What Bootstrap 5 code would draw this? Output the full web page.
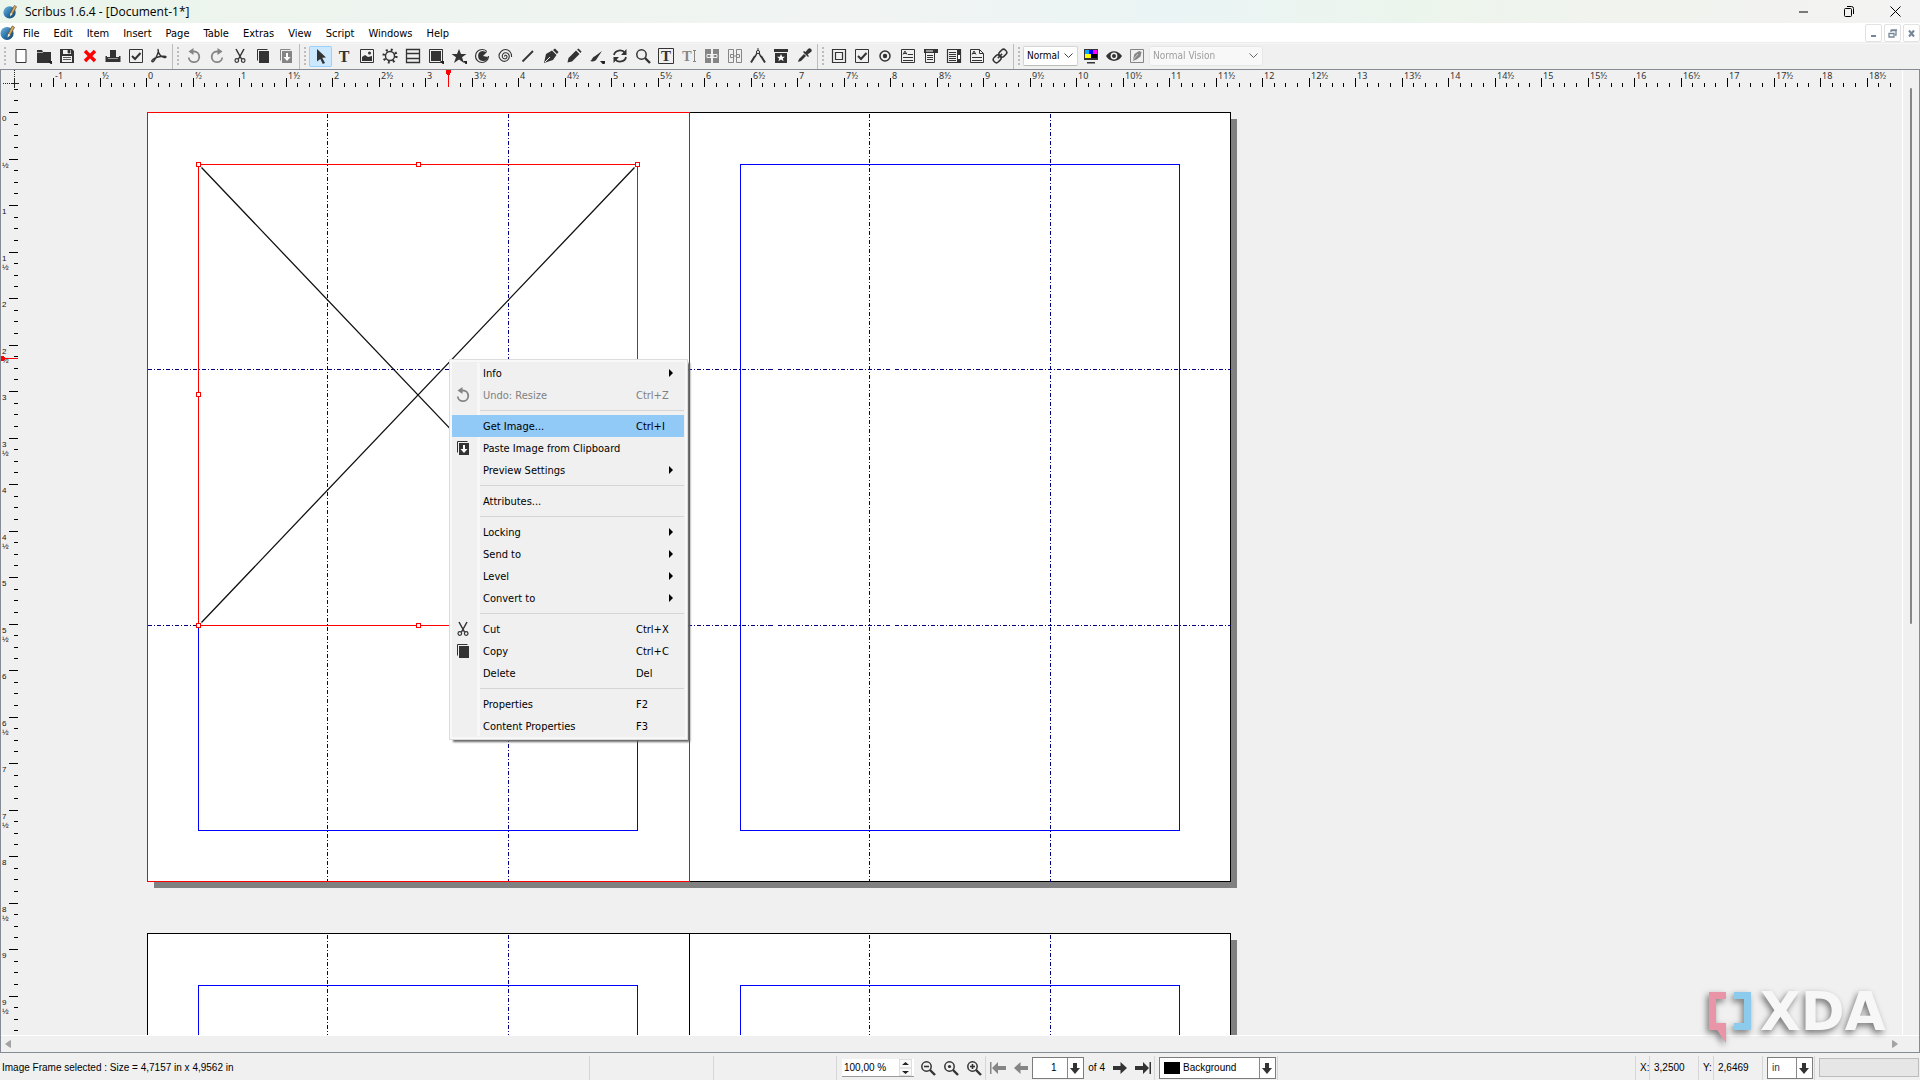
<!DOCTYPE html>
<html lang="en">
<head>
<meta charset="utf-8">
<meta name="viewport" content="width=device-width, initial-scale=1">
<title>Scribus 1.6.4 - [Document-1*]</title>
<link href="https://cdn.jsdelivr.net/npm/bootstrap@5.3.0/dist/css/bootstrap.min.css" rel="stylesheet">
<style>
  body { font: 11px/14px "DejaVu Sans Condensed", "DejaVu Sans", sans-serif; color: #000; background: #f0f0f0; }
  button, select, input { font: inherit; color: inherit; }
  button { border: 0; background: none; padding: 0; }
  svg { display: block; }
  .titlebar { height: 23px; padding: 0 2px 0 3px; font-family: "Open Sans", sans-serif; font-size: 12px; background: linear-gradient(90deg, #ebf5eb 0, #eef4f0 25%, #f1f4f3 45%, #eaf4f4 62%, #ecf5ec 74%, #f1f3ee 84%, #f3f3f3 100%); }
  .titlebar button { width: 46px; height: 21px; display: grid; place-items: center; }
  .menubar { height: 20px; padding-top: 1px; background: #fff; border-bottom: 1px solid #ececec; }
  .menubar a { color: #000; text-decoration: none; }
  .menus { gap: 14px; padding: 1px 0 0 8px; }
  .mdi { width: 17px; height: 18px; margin-left: 2px; border: 1px solid #e2e2e2; border-radius: 2px; background: #fff; color: #75869a; display: grid; place-items: center; }
  .toolbar { height: 26px; border-top: 1px solid #f7f7f7; font-size: 10px; }
  .tool-group { border-right: 1px solid #bdbdbd; padding: 0 2px 1px 0; height: 25px; }
  .tool-group:last-child { border: 0; }
  .grip { width: 2px; margin: 0 3px 0 4px; height: 19px; background: repeating-linear-gradient(#bcbcbc 0 2px, transparent 2px 4px); }
  .tool { width: 23px; height: 21px; display: grid; place-items: center; color: #333; border-radius: 2px; flex: none; }
  .tool svg { width: 16px; height: 16px; overflow: visible; }
  .tool:disabled { color: #858585; }
  .tool.pressed { background: #cce8ff; box-shadow: inset 0 0 0 1px #99d1ff; }
  .combo { appearance: none; height: 20px; border: 1px solid #d5d5d5; border-bottom-color: #bbb; border-radius: 2px; padding: 0 16px 0 3px; background: #fff url("data:image/svg+xml,%3Csvg xmlns='http://www.w3.org/2000/svg' width='9' height='6'%3E%3Cpath d='M.5.5l4 4 4-4' fill='none' stroke='%23444'/%3E%3C/svg%3E") no-repeat right 4px center; }
  .combo:disabled { color: #888; background-color: #fbfbfb; border-color: #e6e6e6; opacity: .8; }
  .combo-short { width: 55px; margin-right: 1px; } .combo-long { width: 114px; margin-left: 1px; }
  .workspace { position: relative; display: grid; grid-template: 18px minmax(0, 1fr) 17px / 18px minmax(0, 1fr) 17px; border: 1px solid #868a94; min-height: 0; }
  .ruler text { font: 9px "Noto Sans", sans-serif; fill: #333; }
  .ruler-side text { font: 8px "Liberation Sans", sans-serif; fill: #111; }
  .canvas-area, .ruler { overflow: hidden; }
  .fill { width: 100%; height: 100%; }
  .vscroll { grid-column: 3; grid-row: 1 / 3; border-left: 1px solid #fff; padding: 18px 0 0 7px; }
  .thumb { width: 2px; height: 56.6%; background: #868686; border-radius: 1px; }
  .hscroll { grid-column: 1 / 4; border-top: 1px solid #fff; padding: 0 21px 0 4px; color: #a3a3a3; }
  .context { position: absolute; left: 430px; top: 271px; width: 239px; background: #f0f0f0; border: 1px solid #dcdcdc; padding: 2px 3px 2px 2px; box-shadow: inset 0 0 0 2px #f8f8f8, 3px 3px 2px -1px #666; }
  .context::before { content: ""; position: absolute; left: 27px; top: 3px; bottom: 3px; width: 3px; background: #f7f7f7; }
  .context button { position: relative; display: grid; grid-template-columns: 31px 153px 1fr; align-items: center; width: 100%; height: 22px; padding-top: 2px; text-align: left; }
  .context button svg { width: 16px; height: 16px; margin: -2px 0 0 3px; color: #333; }
  .context button b { width: 0; height: 0; border: 4px solid transparent; border-left-color: #000; border-right: 0; margin: -2px 0 0 33px; }
  .context button:disabled { color: #808080; }
  .context button:disabled svg { color: #858585; }
  .context .current { background: #91c9f7; }
  .context hr { margin: 4px 0 4px 28px; height: 1px; border: 0; background: #d5d5d5; opacity: 1; }
  .watermark { position: absolute; right: 24px; bottom: 2px; width: 196px; height: 64px; overflow: visible; filter: drop-shadow(-2px 3px 3px #777); }
  .watermark text { font: bold 53px "DejaVu Sans", sans-serif; fill: #f7f7f7; }
  .statusbar { height: 27px; padding: 2px 1px 0 2px; font-family: "Liberation Sans", sans-serif; font-size: 10px; white-space: nowrap; }
  .cell { height: 24px; border-left: 1px solid #d6d6d6; display: flex; align-items: center; flex: none; }
  .statusbar .tool { height: 22px; }
  .spin { width: 73px; height: 18px; margin: 0 2px 0 1px; background: #fff; border-bottom: 1px solid #999; }
  .spin input { border: 0; width: 57px; padding: 2px 2px 0; background: none; }
  .spin div { width: 13px; border: 1px solid #ddd; background: #f8f8f8; }
  .boxed { appearance: none; height: 22px; border: 1px solid #7c7c7c; outline: 0; border-radius: 0; background: #fff url("data:image/svg+xml,%3Csvg xmlns='http://www.w3.org/2000/svg' width='16' height='20'%3E%3Cpath d='M.5 0v20' stroke='%23888'/%3E%3Cpath d='M6 5h4v5h3l-5 6-5-6h3z' fill='%23333'/%3E%3C/svg%3E") no-repeat right center; padding: 0 18px 0 4px; }
  .boxed-page { width: 59px; padding-left: 18px; } .boxed-layer { width: 117px; padding-left: 23px; } .boxed-unit { width: 46px; color: #1a3a5c; }
  .page-count { padding: 0 3px 0 4px; }
  .layer-pick { position: relative; margin-left: 4px; }
  .layer-pick i { position: absolute; left: 5px; top: 5px; width: 16px; height: 12px; background: #000; }
  .meter { width: 100px; height: 19px; border: 1px solid #bcbcbc; background: #e6e6e6; }
</style>
<script src="https://cdn.jsdelivr.net/npm/bootstrap@5.3.0/dist/js/bootstrap.bundle.min.js"></script>
</head>
<body class="vh-100 d-flex flex-column overflow-hidden">

<svg width="0" height="0" class="position-absolute" aria-hidden="true">
  <defs>
    <linearGradient id="ball" x1="0" y1="0" x2="1" y2="1"><stop offset="0" stop-color="#7db7dc"/><stop offset=".5" stop-color="#2b78ae"/><stop offset="1" stop-color="#0f3d66"/></linearGradient>
    <symbol id="i-app" viewBox="0 0 16 16"><circle cx="7.500" cy="8.500" r="7" fill="url(#ball)"/><path d="M8 13l.5-4L13 .5 15.500 2 11 10z" fill="#d8a860" stroke="#5b4326" stroke-width=".7"/><path d="M8 13l.5-4 2.500 1.200z" fill="#f3efe4"/></symbol>
    <symbol id="i-new" viewBox="0 0 16 16"><path d="M3 1.500h10v13H3z" fill="#fff" stroke="currentColor"/></symbol>
    <symbol id="i-open" viewBox="0 0 16 16"><path d="M1 2h5l1 2h8v11H1z" fill="currentColor"/><path d="M1 4.500h6" stroke="#aaa"/><path d="M12 13h7l-3.500 4z" fill="#222"/></symbol>
    <symbol id="i-save" viewBox="0 0 16 16"><path d="M1 1h12l2 2v12H1z" fill="currentColor"/><path d="M4 2h8v4H4zM3 8h10v6H3z" fill="#f0f0f0"/><path d="M9 2h2v3H9zM4 9.500h8M4 11.500h8" stroke="currentColor" fill="currentColor" stroke-width=".8"/></symbol>
    <symbol id="i-close" viewBox="0 0 16 16"><path d="M3 3l10 10M13 3L3 13" stroke="red" stroke-width="3.400"/></symbol>
    <symbol id="i-print" viewBox="0 0 16 16"><path d="M5 2h6v7h3v-1h1.500v6H.5V8H2v1h3z" fill="currentColor"/><path d="M3 10.500h10" stroke="#999"/></symbol>
    <symbol id="i-check" viewBox="0 0 16 16"><path d="M1.500 1.500h13v13h-13z" fill="none" stroke="currentColor"/><path d="M4 8l3 3 5.500-6" fill="none" stroke="currentColor" stroke-width="2"/></symbol>
    <symbol id="i-pdf" viewBox="0 0 16 16"><path d="M6.500 1.500c2 0 0 5-1.500 8s-3 5-4 4 2-3.500 6-4.500 8-1 8 0-4 .5-6-2S7 1.500 7 1.500" fill="none" stroke="currentColor" stroke-width="1.400"/></symbol>
    <symbol id="i-undo" viewBox="0 0 16 16"><path d="M6 3.500h2a5.300 5.300 0 1 1-5.300 6" fill="none" stroke="currentColor" stroke-width="1.800"/><path d="M7.500 0v7L2.500 3.500z" fill="currentColor"/></symbol>
    <symbol id="i-redo" viewBox="0 0 16 16"><path d="M10 3.500H8a5.300 5.300 0 1 0 5.300 6" fill="none" stroke="currentColor" stroke-width="1.800"/><path d="M8.500 0v7l5-3.500z" fill="currentColor"/></symbol>
    <symbol id="i-cut" viewBox="0 0 16 16"><path d="M4 1l5.500 10M12 1L6.500 11" stroke="currentColor" stroke-width="1.500"/><circle cx="4.800" cy="12.500" r="1.800" fill="none" stroke="currentColor" stroke-width="1.200"/><circle cx="11.200" cy="12.500" r="1.800" fill="none" stroke="currentColor" stroke-width="1.200"/></symbol>
    <symbol id="i-copy" viewBox="0 0 16 16"><path d="M2.500 12.500v-11h10" fill="none" stroke="currentColor"/><path d="M4 3h10v12H4z" fill="currentColor"/></symbol>
    <symbol id="i-paste" viewBox="0 0 16 16"><path d="M2.500 12.500v-11h10" fill="none" stroke="currentColor"/><path d="M4 3h10v12H4z" fill="currentColor"/><path d="M8 5h2v4h2.500L9 13 5.500 9H8z" fill="#fff"/></symbol>
    <symbol id="i-arrow" viewBox="0 0 16 16"><path d="M4 1l9 8.500-3.800.3L12 15l-2.200 1-2.500-5L4 13.500z" fill="currentColor"/></symbol>
    <symbol id="i-image" viewBox="0 0 16 16"><path d="M1.500 1.500h13v13h-13z" fill="none" stroke="currentColor"/><path d="M3 13V9l3-2 3 2 4-1v5z" fill="currentColor"/><circle cx="10.500" cy="5" r="1.500" fill="currentColor"/></symbol>
    <symbol id="i-gear" viewBox="0 0 16 16"><circle cx="8" cy="8" r="4.500" fill="none" stroke="currentColor" stroke-width="1.400"/><circle cx="8" cy="8" r="6.300" fill="none" stroke="currentColor" stroke-width="2.600" stroke-dasharray="1.900 3.048"/></symbol>
    <symbol id="i-table" viewBox="0 0 16 16"><path d="M1.500 1.500h13v13h-13zM2 5.500h12M2 10.500h12" fill="none" stroke="currentColor" stroke-width="1.300"/></symbol>
    <symbol id="i-shape" viewBox="0 0 16 16"><path d="M1.500 1.500h13v13h-13z" fill="none" stroke="currentColor"/><path d="M3 3h10v10H3z" fill="currentColor"/><path d="M12 13h7l-3.500 4z" fill="#222"/></symbol>
    <symbol id="i-star" viewBox="0 0 16 16"><path d="M8 1l2 5h5.500L11 9.200 13 15l-5-3.500L3 15l2-5.800L.5 6H6z" fill="currentColor"/><path d="M12 13h7l-3.500 4z" fill="#222"/></symbol>
    <symbol id="i-pie" viewBox="0 0 16 16"><path d="M8 1.500A6.500 6.500 0 1 0 14.500 8" fill="none" stroke="currentColor" stroke-width="1.200"/><path d="M8.500 3A5 5 0 1 0 14 9l-5-1 4-4z" fill="currentColor"/><path d="M8 1.500a6.500 6.500 0 0 1 5 2" fill="none" stroke="currentColor"/></symbol>
    <symbol id="i-spiral" viewBox="0 0 16 16"><path d="M8 8.500c-1-1 1-2 1.800-.5S9 11 7.300 10.800 4.500 8 6 6s5-1.500 6 1-1 6-4 6.300S2 11 2 8s3-6.500 6.500-6.500S15 5 14.500 9" fill="none" stroke="currentColor" stroke-width="1.100"/></symbol>
    <symbol id="i-line" viewBox="0 0 16 16"><path d="M2.500 13.500L13 3" stroke="currentColor" stroke-width="1.800"/></symbol>
    <symbol id="i-pen" viewBox="0 0 16 16"><path d="M1 15l2-9 6-3.500L13.500 7 10 12z" fill="currentColor"/><path d="M10 2l2-1.500L15.500 4 14 6z" fill="currentColor"/><path d="M2 14l5-5" stroke="#f0f0f0"/></symbol>
    <symbol id="i-pencil" viewBox="0 0 16 16"><path d="M1.500 14.500l1-4.500L10 2.500 13.500 6 6 13.500zM11 1.500l1.500-1 3 3-1 1.500z" fill="currentColor"/></symbol>
    <symbol id="i-brush" viewBox="0 0 16 16"><path d="M1 13c2 0 2-4 4.500-4.500L13 3l-5 7.500C7 13 4 14 1 13z" fill="currentColor"/><path d="M11 13h7l-3.500 4z" fill="#222"/></symbol>
    <symbol id="i-rotate" viewBox="0 0 16 16"><path d="M2 7a6 5.500 0 0 1 11-2M14 9a6 5.500 0 0 1-11 2" fill="none" stroke="currentColor" stroke-width="1.800"/><path d="M14.500 1v6H9zM1.500 15V9H7z" fill="currentColor"/></symbol>
    <symbol id="i-zoom" viewBox="0 0 16 16"><circle cx="6.500" cy="6.500" r="4.700" fill="none" stroke="currentColor" stroke-width="1.500"/><path d="M10 10l5 5" stroke="currentColor" stroke-width="2.400"/></symbol>
    <symbol id="i-zoomout" viewBox="0 0 16 16"><use href="#i-zoom"/><path d="M4 6.500h5" stroke="currentColor" stroke-width="1.600"/></symbol>
    <symbol id="i-zoomin" viewBox="0 0 16 16"><use href="#i-zoomout"/><path d="M6.500 4v5" stroke="currentColor" stroke-width="1.600"/></symbol>
    <symbol id="i-zoomone" viewBox="0 0 16 16"><use href="#i-zoom"/><circle cx="6.500" cy="6.500" r="1.600" fill="currentColor"/></symbol>
    <symbol id="i-link" viewBox="0 0 16 16"><path d="M1 1h6v14H1zM9 1h6v14H9z" fill="currentColor"/><path d="M3 6.500h4v3H3zM9 6.500h4v3H9zM6 8h4" fill="none" stroke="#f0f0f0"/></symbol>
    <symbol id="i-unlink" viewBox="0 0 16 16"><path d="M1.500 1.500h5v13h-5zM9.500 1.500h5v13h-5zM3.500 6.500h3v3h-3zM9.500 6.500h3v3h-3zM6 8h4" fill="none" stroke="currentColor"/></symbol>
    <symbol id="i-measure" viewBox="0 0 16 16"><path d="M7 5L5 9M9 5l2 4" stroke="currentColor" stroke-width="1.500"/><path d="M5 8l-4 6.500M11 8l4 6.500" stroke="currentColor" stroke-width="2"/><circle cx="8" cy="4" r="1.600" fill="none" stroke="currentColor"/><path d="M8 0v2" stroke="currentColor"/></symbol>
    <symbol id="i-props" viewBox="0 0 16 16"><path d="M1 1h14v3H1zM2 5h12v10H2z" fill="currentColor"/><path d="M8 6l1.200 2.700h2.800l-2.200 1.800.8 2.800L8 11.600l-2.600 1.700.8-2.800L4 8.700h2.800z" fill="#fff"/></symbol>
    <symbol id="i-drop" viewBox="0 0 16 16"><path d="M2 14l1-3 5-5 2 2-5 5zM7 4l5 5 1-1-1.500-1.500L15 4a2 2 0 0 0-3-3L9.500 4 8 3z" fill="currentColor"/></symbol>
    <symbol id="i-pushbtn" viewBox="0 0 16 16"><path d="M1.500 1.500h13v13h-13zM4.500 4.500h7v7h-7z" fill="none" stroke="currentColor" stroke-width="1.200"/></symbol>
    <symbol id="i-radio" viewBox="0 0 16 16"><circle cx="8" cy="8" r="5" fill="none" stroke="currentColor" stroke-width="1.500"/><circle cx="8" cy="8" r="2.200" fill="currentColor"/></symbol>
    <symbol id="i-field" viewBox="0 0 16 16"><path d="M1.500 1.500h13v13h-13zM3 6.500L5 3l2 3.500M3.500 5.500h3M8 6.500h5M3 9.500h10M3 12.500h10" fill="none" stroke="currentColor"/></symbol>
    <symbol id="i-combo" viewBox="0 0 16 16"><path d="M1 1h14v4H1z" fill="currentColor"/><path d="M2.500 5v9.500h9V5M4 7.500h6M4 9.500h6M4 11.500h6" fill="none" stroke="currentColor"/><path d="M3 3h7" stroke="#fff"/></symbol>
    <symbol id="i-list" viewBox="0 0 16 16"><path d="M1.500 1.500h13v13h-13zM3 4.500h7M3 6.500h7M3 8.500h7M3 10.500h7M3 12.500h7" fill="none" stroke="currentColor" stroke-width="1.200"/><path d="M11 1h4v14h-4z" fill="currentColor"/><path d="M12 7h2v4h-2z" fill="#fff"/></symbol>
    <symbol id="i-note" viewBox="0 0 16 16"><path d="M1.500 1.500h9l4 4v9h-13zM10.500 1.500v4h4M3 6.500L5 3l2 3.500M3.500 5.500h3M3 9.500h10M3 12.500h10" fill="none" stroke="currentColor"/></symbol>
    <symbol id="i-chain" viewBox="0 0 16 16"><g transform="rotate(-45 8 8)" fill="none" stroke="currentColor" stroke-width="1.500"><rect x="0" y="5" width="8" height="6" rx="2.500"/><rect x="8" y="5" width="8" height="6" rx="2.500"/><path d="M5 8h6"/></g></symbol>
    <symbol id="i-cmyk" viewBox="0 0 16 16"><path d="M1 1h14v11H1z" fill="currentColor"/><path d="M2 2h4v4H2z" fill="#0af"/><path d="M6 2h4v4H6z" fill="#00f"/><path d="M10 2h4v4h-4z" fill="#f0f"/><path d="M2 6h6v4H2z" fill="#ff0"/><path d="M8 6h6v4H8z"/><path d="M4 14h8v1.500H4z" fill="currentColor"/></symbol>
    <symbol id="i-eye" viewBox="0 0 16 16"><path d="M0 8c4-6.500 12-6.500 16 0-4 6.500-12 6.500-16 0z" fill="currentColor"/><circle cx="8" cy="8" r="3.400" fill="#f0f0f0"/><circle cx="8" cy="8" r="2" fill="currentColor"/></symbol>
    <symbol id="i-edit" viewBox="0 0 16 16"><path d="M1.500 1.500h13v13h-13z" fill="none" stroke="currentColor"/><path d="M3.500 13l2-7L10 3l2.500 1-1 4.500-4 3z" fill="currentColor"/><path d="M3 13l6-7" stroke="#f0f0f0" stroke-width=".7"/></symbol>
    <symbol id="i-prev" viewBox="0 0 16 16"><path d="M1 8l6.500-6v4H15v4H7.500v4z" fill="currentColor"/></symbol>
    <symbol id="i-next" viewBox="0 0 16 16"><path d="M15 8L8.500 2v4H1v4h7.500v4z" fill="currentColor"/></symbol>
    <symbol id="i-first" viewBox="0 0 16 16"><path d="M0 2h1.500v12H0zM2 8l6-6v4h8v4H8v4z" fill="currentColor"/></symbol>
    <symbol id="i-last" viewBox="0 0 16 16"><path d="M16 2h-1.500v12H16zM14 8L8 2v4H0v4h8v4z" fill="currentColor"/></symbol>
    <symbol id="i-text" viewBox="0 0 16 16"><text x="8" y="13.500" text-anchor="middle" font-family="Liberation Serif, serif" font-weight="700" font-size="16" fill="currentColor">T</text></symbol>
    <symbol id="i-textbox" viewBox="0 0 16 16"><path d="M.5.5h15v15H.5z" fill="none" stroke="currentColor"/><text x="8" y="13" text-anchor="middle" font-family="Liberation Serif, serif" font-weight="700" font-size="15" fill="currentColor">T</text></symbol>
    <symbol id="i-textcur" viewBox="0 0 16 16"><text x="6" y="13" text-anchor="middle" font-family="Liberation Serif, serif" font-weight="700" font-size="14" fill="currentColor">T</text><path d="M12 2.500h3M12 13.500h3M13.500 3v10" stroke="currentColor"/></symbol>
  </defs>
</svg>

<header class="titlebar d-flex align-items-center flex-shrink-0">
  <svg class="me-1" width="14" height="16"><use href="#i-app"/></svg>
  <span class="ps-1 me-auto">Scribus 1.6.4 - [Document-1*]</span>
  <button aria-label="Minimize"><svg width="11" height="11"><path d="M1 6h9" stroke="#000"/></svg></button>
  <button aria-label="Restore"><svg width="11" height="11"><rect x=".5" y="2.500" width="7" height="8" rx="1" fill="none" stroke="#000"/><path d="M3 .5h4.500a2 2 0 0 1 2 2V8" fill="none" stroke="#000"/></svg></button>
  <button aria-label="Close"><svg width="11" height="11"><path d="M.5.5l10 10M10.500.5l-10 10" stroke="#000"/></svg></button>
</header>

<nav class="menubar d-flex align-items-center flex-shrink-0" aria-label="Main menu">
  <svg width="15" height="16"><use href="#i-app"/></svg>
  <div class="menus d-flex">
    <a href="#">File</a><a href="#">Edit</a><a href="#">Item</a><a href="#">Insert</a><a href="#">Page</a><a href="#">Table</a><a href="#">Extras</a><a href="#">View</a><a href="#">Script</a><a href="#">Windows</a><a href="#">Help</a>
  </div>
  <div class="ms-auto d-flex">
    <button class="mdi" aria-label="Minimize document"><svg width="9" height="9"><path d="M2 6h5v2H2z" fill="currentColor"/></svg></button>
    <button class="mdi" aria-label="Restore document"><svg width="9" height="9"><path d="M1 4.500h5v3.500H1zM3 3V1.500h5V6H7M3 1h6" fill="none" stroke="currentColor" stroke-width="1.300"/></svg></button>
    <button class="mdi" aria-label="Close document"><svg width="9" height="9"><path d="M2 1.500l5 6M7 1.500l-5 6" stroke="currentColor" stroke-width="2"/></svg></button>
  </div>
</nav>

<div class="toolbar d-flex flex-shrink-0" role="toolbar" aria-label="Tools">
  <div class="tool-group d-flex align-items-center"><span class="grip"></span>
    <button class="tool" aria-label="New"><svg><use href="#i-new"/></svg></button>
    <button class="tool" aria-label="Open"><svg><use href="#i-open"/></svg></button>
    <button class="tool" aria-label="Save"><svg><use href="#i-save"/></svg></button>
    <button class="tool" aria-label="Close"><svg><use href="#i-close"/></svg></button>
    <button class="tool" aria-label="Print"><svg><use href="#i-print"/></svg></button>
    <button class="tool" aria-label="Preflight verifier"><svg><use href="#i-check"/></svg></button>
    <button class="tool" aria-label="Save as PDF"><svg><use href="#i-pdf"/></svg></button>
  </div>
  <div class="tool-group d-flex align-items-center"><span class="grip"></span>
    <button class="tool" disabled aria-label="Undo"><svg><use href="#i-undo"/></svg></button>
    <button class="tool" disabled aria-label="Redo"><svg><use href="#i-redo"/></svg></button>
    <button class="tool" aria-label="Cut"><svg><use href="#i-cut"/></svg></button>
    <button class="tool" aria-label="Copy"><svg><use href="#i-copy"/></svg></button>
    <button class="tool" disabled aria-label="Paste"><svg><use href="#i-paste"/></svg></button>
  </div>
  <div class="tool-group d-flex align-items-center"><span class="grip"></span>
    <button class="tool pressed" aria-label="Select item"><svg><use href="#i-arrow"/></svg></button>
    <button class="tool" aria-label="Text frame"><svg><use href="#i-text"/></svg></button>
    <button class="tool" aria-label="Image frame"><svg><use href="#i-image"/></svg></button>
    <button class="tool" aria-label="Render frame"><svg><use href="#i-gear"/></svg></button>
    <button class="tool" aria-label="Table"><svg><use href="#i-table"/></svg></button>
    <button class="tool" aria-label="Shape"><svg><use href="#i-shape"/></svg></button>
    <button class="tool" aria-label="Polygon"><svg><use href="#i-star"/></svg></button>
    <button class="tool" aria-label="Arc"><svg><use href="#i-pie"/></svg></button>
    <button class="tool" aria-label="Spiral"><svg><use href="#i-spiral"/></svg></button>
    <button class="tool" aria-label="Line"><svg><use href="#i-line"/></svg></button>
    <button class="tool" aria-label="Bezier curve"><svg><use href="#i-pen"/></svg></button>
    <button class="tool" aria-label="Freehand line"><svg><use href="#i-pencil"/></svg></button>
    <button class="tool" aria-label="Calligraphic line"><svg><use href="#i-brush"/></svg></button>
    <button class="tool" aria-label="Rotate item"><svg><use href="#i-rotate"/></svg></button>
    <button class="tool" aria-label="Zoom"><svg><use href="#i-zoom"/></svg></button>
    <button class="tool" aria-label="Edit contents"><svg><use href="#i-textbox"/></svg></button>
    <button class="tool" disabled aria-label="Edit text"><svg><use href="#i-textcur"/></svg></button>
    <button class="tool" disabled aria-label="Link text frames"><svg><use href="#i-link"/></svg></button>
    <button class="tool" disabled aria-label="Unlink text frames"><svg><use href="#i-unlink"/></svg></button>
    <button class="tool" aria-label="Measurements"><svg><use href="#i-measure"/></svg></button>
    <button class="tool" aria-label="Copy item properties"><svg><use href="#i-props"/></svg></button>
    <button class="tool" aria-label="Eye dropper"><svg><use href="#i-drop"/></svg></button>
  </div>
  <div class="tool-group d-flex align-items-center"><span class="grip"></span>
    <button class="tool" aria-label="PDF push button"><svg><use href="#i-pushbtn"/></svg></button>
    <button class="tool" aria-label="PDF check box"><svg><use href="#i-check"/></svg></button>
    <button class="tool" aria-label="PDF radio button"><svg><use href="#i-radio"/></svg></button>
    <button class="tool" aria-label="PDF text field"><svg><use href="#i-field"/></svg></button>
    <button class="tool" aria-label="PDF combo box"><svg><use href="#i-combo"/></svg></button>
    <button class="tool" aria-label="PDF list box"><svg><use href="#i-list"/></svg></button>
    <button class="tool" aria-label="Text annotation"><svg><use href="#i-note"/></svg></button>
    <button class="tool" aria-label="Link annotation"><svg><use href="#i-chain"/></svg></button>
  </div>
  <div class="tool-group d-flex align-items-center"><span class="grip"></span>
    <select class="combo combo-short" aria-label="Preview quality"><option>Normal</option></select>
    <button class="tool" aria-label="Color management"><svg><use href="#i-cmyk"/></svg></button>
    <button class="tool" aria-label="Preview mode"><svg><use href="#i-eye"/></svg></button>
    <button class="tool" disabled aria-label="Edit in preview"><svg><use href="#i-edit"/></svg></button>
    <select class="combo combo-long" disabled aria-label="Vision simulation"><option>Normal Vision</option></select>
  </div>
</div>

<main class="workspace flex-grow-1">
  <svg class="fill" shape-rendering="crispEdges" stroke="#222"><path d="M13.500 0v9M2 13.500h8" stroke-dasharray="1 1"/><path d="M13.500 9v9M10 13.500h8"/></svg>
  <svg class="fill ruler" id="ruler-x" shape-rendering="crispEdges"></svg>
  <svg class="fill ruler ruler-side" id="ruler-y" shape-rendering="crispEdges"></svg>

  <div class="canvas-area position-relative">
    <!-- Drawing units are window pixels; the group shifts them past the rulers -->
    <svg class="fill" shape-rendering="crispEdges">
      <g transform="translate(-18.500 -87.500)" fill="none">
        <path d="M154 119H1237V888H154zM154 940H1237V1200H154z" fill="#808080" transform="translate(-.5 -.5)"/>
        <path d="M147 112H1230V881H147zM147 933H1230V1200H147zM689 933V1200" fill="#fff" stroke="#000"/>
        <path d="M198 164H637V830H198zM740 164H1179V830H740zM198 985H637V1200H198zM740 985H1179V1200H740z" stroke="#00f"/>
        <path d="M327 113V881M508 113V881M869 113V881M1050 113V881M327 934V1200M508 934V1200M869 934V1200M1050 934V1200M147 369H1230M147 625H1230" stroke="#000080" stroke-dasharray="4 2 1 2"/>
        <path d="M147 112H689V881H147z" stroke="#f00"/>
        <path d="M201 167L634 622M634 167L201 622" stroke="#111" stroke-width="1.300" shape-rendering="auto"/>
        <path d="M198 164H637V625H198z" stroke="#f00"/>
        <path d="M196 162h4v4h-4zM416 162h4v4h-4zM635 162h4v4h-4zM196 392h4v4h-4zM196 623h4v4h-4zM416 623h4v4h-4z" fill="#fff" stroke="#f00"/>
      </g>
    </svg>

    <div class="context" role="menu">
      <button role="menuitem"><span></span>Info<b></b></button>
      <button role="menuitem" disabled><svg><use href="#i-undo"/></svg>Undo: Resize<span>Ctrl+Z</span></button>
      <hr>
      <button role="menuitem" class="current"><span></span>Get Image...<span>Ctrl+I</span></button>
      <button role="menuitem"><svg><use href="#i-paste"/></svg>Paste Image from Clipboard</button>
      <button role="menuitem"><span></span>Preview Settings<b></b></button>
      <hr>
      <button role="menuitem"><span></span>Attributes...</button>
      <hr>
      <button role="menuitem"><span></span>Locking<b></b></button>
      <button role="menuitem"><span></span>Send to<b></b></button>
      <button role="menuitem"><span></span>Level<b></b></button>
      <button role="menuitem"><span></span>Convert to<b></b></button>
      <hr>
      <button role="menuitem"><svg><use href="#i-cut"/></svg>Cut<span>Ctrl+X</span></button>
      <button role="menuitem"><svg><use href="#i-copy"/></svg>Copy<span>Ctrl+C</span></button>
      <button role="menuitem"><span></span>Delete<span>Del</span></button>
      <hr>
      <button role="menuitem"><span></span>Properties<span>F2</span></button>
      <button role="menuitem"><span></span>Content Properties<span>F3</span></button>
    </div>
  </div>

  <div class="vscroll"><div class="thumb"></div></div>
  <div class="hscroll d-flex align-items-center justify-content-between">
    <svg width="6" height="10"><path d="M6 1v8L4 8 0 5l4-3z" fill="currentColor"/></svg>
    <svg width="6" height="10"><path d="M0 1v8l2-1 4-3-4-3z" fill="currentColor"/></svg>
  </div>

  <svg class="watermark" viewBox="0 0 196 64">
    <path d="M10 6h17v7H17v24h10v20l-9-13h-8z" fill="#ea94a8"/>
    <path d="M35 6h17v38H35v-7h10V13H35z" fill="#8ccbeb"/>
    <text x="61" y="44">XDA</text>
  </svg>
</main>

<footer class="statusbar d-flex align-items-center flex-shrink-0">
  <span class="flex-grow-1">Image Frame selected : Size = 4,7157 in x 4,9562 in</span>
  <div class="cell" style="width:124px"></div>
  <div class="cell" style="width:123px"></div>
  <div class="cell ps-1" style="width:149px">
    <div class="spin d-flex">
      <input aria-label="Zoom level" value="100,00 %">
      <div><svg width="11" height="15"><path d="M5.500 2L9 5H2zM5.500 14L9 11H2z" fill="#222"/><path d="M0 8h11" stroke="#ccc"/></svg></div>
    </div>
    <button class="tool" aria-label="Zoom out"><svg><use href="#i-zoomout"/></svg></button>
    <button class="tool" aria-label="Zoom to 100%"><svg><use href="#i-zoomone"/></svg></button>
    <button class="tool" aria-label="Zoom in"><svg><use href="#i-zoomin"/></svg></button>
  </div>
  <div class="cell" style="width:169px">
    <button class="tool" disabled aria-label="First page"><svg><use href="#i-first"/></svg></button>
    <button class="tool" disabled aria-label="Previous page"><svg><use href="#i-prev"/></svg></button>
    <select class="boxed boxed-page" aria-label="Page"><option>1</option></select>
    <span class="page-count">of 4</span>
    <button class="tool" aria-label="Next page"><svg><use href="#i-next"/></svg></button>
    <button class="tool" aria-label="Last page"><svg><use href="#i-last"/></svg></button>
  </div>
  <div class="cell" style="width:123px"><div class="layer-pick"><select class="boxed boxed-layer" aria-label="Layer"><option>Background</option></select><i></i></div></div>
  <div class="cell" style="width:358px"></div>
  <div class="cell ps-1" style="width:14px">X:</div>
  <div class="cell ps-1" style="width:49px">3,2500</div>
  <div class="cell ps-1" style="width:15px">Y:</div>
  <div class="cell ps-1" style="width:49px">2,6469</div>
  <div class="cell ps-1" style="width:52px"><select class="boxed boxed-unit" aria-label="Unit"><option>in</option></select></div>
  <div class="cell ps-1"><div class="meter" role="progressbar" aria-label="Progress"></div></div>
</footer>

<script>
  // Rulers: 93 px to the inch, eight divisions, a label on each half inch
  const INCH = 93, HALF = '½';
  const label = n => { const w = Math.trunc(n); return [w || (n % 1 === 0) ? String(w) : '', n % 1 ? HALF : '']; };
  function draw() {
    const rx = document.getElementById('ruler-x'), ry = document.getElementById('ruler-y');
    let ticks = '', texts = '';
    for (let k = -11; ; k++) {
      const x = Math.floor(146.5 + k * INCH / 8) - 19;
      if (x > rx.clientWidth - 8) break;
      ticks += `M${x + .5} ${k % 4 ? 13 : 8}V17`;
      if (k % 4 === 0) texts += `<text x="${x + 2}" y="9">${label(k / 8).join('')}</text>`;
    }
    rx.innerHTML = `<path d="${ticks}" stroke="#000"/>${texts}<path d="M429.500 4V17" stroke="red"/><path d="M427 0h5v2l-1 3h-3l-1-3z" fill="red"/>`;
    ticks = texts = '';
    for (let k = -2; ; k++) {
      const y = Math.floor(112.5 + k * INCH / 8) - 88;
      if (y > ry.clientHeight) break;
      ticks += `M${k % 4 ? 13 : 8} ${y + .5}H17`;
      if (k % 4 === 0) label(k / 8).filter(Boolean).forEach((t, i) =>
        texts += `<text x="1" y="${y + 9 + i * 9}">${t}</text>`);
    }
    ry.innerHTML = `<path d="${ticks}" stroke="#000"/>${texts}<path d="M4 270.500H17" stroke="red"/><path d="M0 268v5h2l2-1v-3l-2-1z" fill="red"/>`;
  }
  draw();
  addEventListener('resize', draw);
</script>
</body>
</html>
